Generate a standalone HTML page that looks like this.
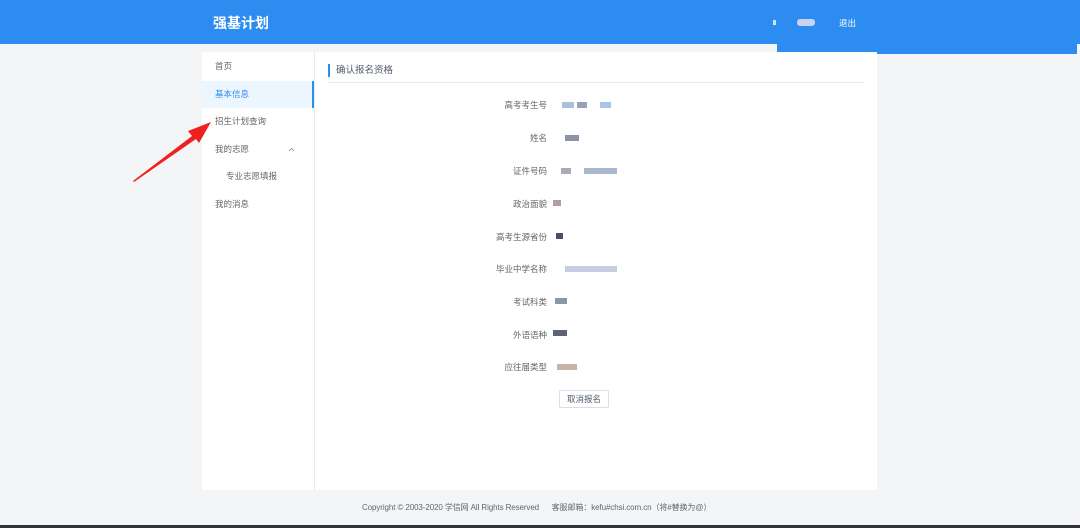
<!DOCTYPE html>
<html><head><meta charset="utf-8"><style>
*{margin:0;padding:0;box-sizing:border-box}
body{width:1080px;height:528px;overflow:hidden;background:#f4f5f7;font-family:"Liberation Sans","Noto Sans CJK SC",sans-serif;position:relative;color:#515a6e}
.hdr{position:absolute;left:0;top:0;width:1080px;height:44px;background:#2d8cf0}
.ext{position:absolute;left:777px;top:44px;width:300px;height:10px;background:#2d8cf0}
.logo{position:absolute;left:213px;top:13px;color:#fff;font-size:14px;font-weight:bold}
.out{position:absolute;left:839px;top:17px;color:#fff;font-size:8.5px}
.side{position:absolute;left:202px;top:52px;width:113px;height:438px;background:#fff;border-right:1px solid #e8eaec;padding-top:1px}
.side div{height:27.5px;line-height:27.5px;font-size:8.5px;padding-left:13px;color:#666;position:relative}
.side .act{background:#ebf6ff;color:#2d8cf0;border-right:2px solid #2d8cf0}
.main{position:absolute;left:315px;top:52px;width:562px;height:438px;background:#fff}
.ttl{position:absolute;left:13px;top:12px;border-left:2px solid #2d8cf0;padding-left:6px;font-size:9.5px;line-height:13px;color:#515a6e}
.line{position:absolute;left:13px;top:30px;width:536px;height:1px;background:#e8eaec}
.row{position:absolute;left:0;width:232px;text-align:right;font-size:8.5px;color:#666}
.b{position:absolute;height:6px;display:inline-block}
.btn{position:absolute;left:244px;top:338px;width:50px;height:18px;border:1px solid #dcdee2;border-radius:2px;font-size:8.5px;text-align:center;line-height:16px;color:#515a6e}
.foot{position:absolute;top:502px;left:362px;font-size:8px;color:#666;white-space:pre;letter-spacing:-0.1px}
.bot{position:absolute;left:0;top:525px;width:1080px;height:3px;background:#333}
</style></head><body>
<div class="hdr"></div><div class="ext"></div>
<div class="logo">强基计划</div>
<span class="b" style="left:773px;top:20px;width:3px;height:5px;background:#cfe3fb"></span>
<span class="b" style="left:797px;top:19px;width:18px;height:7px;background:#c9d2f5;border-radius:3px"></span>
<div class="out">退出</div>
<div class="side">
<div>首页</div><div class="act">基本信息</div><div>招生计划查询</div>
<div>我的志愿<svg style="position:absolute;left:86px;top:11px" width="7" height="5"><path d="M1 4 L3.5 1.5 L6 4" fill="none" stroke="#888" stroke-width="0.8"/></svg></div>
<div style="padding-left:24px">专业志愿填报</div><div>我的消息</div>
</div>
<div class="main">
<div class="ttl">确认报名资格</div><div class="line"></div>
<div class="row" style="top:47px">高考考生号</div>
<div class="row" style="top:80px">姓名</div>
<div class="row" style="top:113px">证件号码</div>
<div class="row" style="top:146px">政治面貌</div>
<div class="row" style="top:179px">高考生源省份</div>
<div class="row" style="top:211px">毕业中学名称</div>
<div class="row" style="top:244px">考试科类</div>
<div class="row" style="top:277px">外语语种</div>
<div class="row" style="top:309px">应往届类型</div>
<span class="b" style="left:247px;top:50px;width:12px;background:#a9bfe0"></span>
<span class="b" style="left:262px;top:50px;width:10px;background:#9aa3b5"></span>
<span class="b" style="left:285px;top:50px;width:11px;background:#a8c4e6"></span>
<span class="b" style="left:250px;top:83px;width:14px;background:#8a93a8"></span>
<span class="b" style="left:246px;top:116px;width:10px;background:#a8acb4"></span>
<span class="b" style="left:269px;top:116px;width:33px;background:#aab8cf"></span>
<span class="b" style="left:238px;top:148px;width:8px;background:#b89aa4"></span>
<span class="b" style="left:241px;top:181px;width:7px;background:#4a5068"></span>
<span class="b" style="left:250px;top:214px;width:52px;background:#b8c0d8;opacity:.8"></span>
<span class="b" style="left:240px;top:246px;width:12px;background:#8c95ae"></span>
<span class="b" style="left:238px;top:278px;width:14px;background:#5d6478"></span>
<span class="b" style="left:242px;top:312px;width:20px;background:#c9b2a8"></span>
<div class="btn">取消报名</div>
</div>
<svg style="position:absolute;left:0;top:0" width="1080" height="528"><path d="M133 181 L192 136 L188 131 L211 122 L199 143 L196 139 L134 182Z" fill="#f02020"/></svg>
<div class="foot">Copyright © 2003-2020 学信网 All Rights Reserved      客服邮箱：kefu#chsi.com.cn（将#替换为@）</div>
<div class="bot"></div>
</body></html>
